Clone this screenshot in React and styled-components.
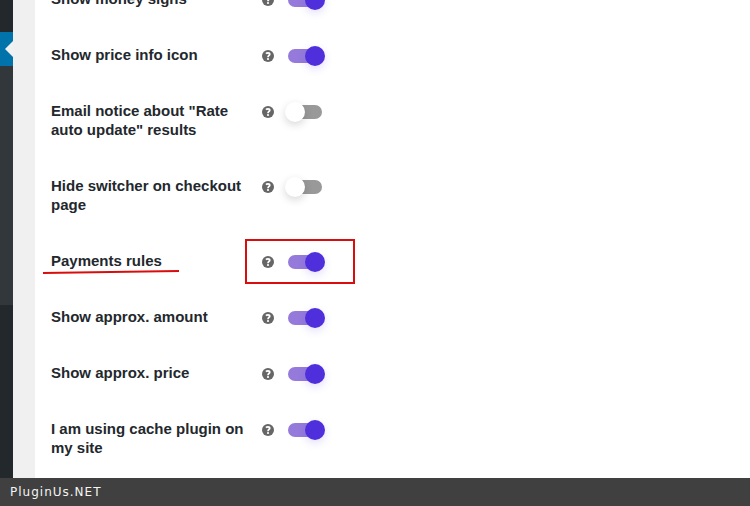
import React, { useState } from 'react';

import styled, { createGlobalStyle } from 'styled-components';

const options = [
  { id: 'money-signs', label: 'Show money signs', on: true },
  { id: 'price-info', label: 'Show price info icon', on: true },
  {
    id: 'email-notice',
    label: 'Email notice about "Rate auto update" results',
    on: false
  },
  { id: 'hide-switcher', label: 'Hide switcher on checkout page', on: false },
  { id: 'payments-rules', label: 'Payments rules', on: true, marked: true },
  { id: 'approx-amount', label: 'Show approx. amount', on: true },
  { id: 'approx-price', label: 'Show approx. price', on: true },
  { id: 'cache-plugin', label: 'I am using cache plugin on my site', on: true }
];

const GlobalStyle = createGlobalStyle`
  * {
    box-sizing: border-box;
  }

  body {
    margin: 0;
    background: #fff;
    font-family: "Liberation Sans", Arial, sans-serif;
  }
`;

const Page = styled.div`
  display: flex;
  flex-direction: column;
  min-height: 100vh;
  overflow: hidden;
`;

const Main = styled.div`
  display: flex;
  flex: 1;
`;

// Admin menu, collapsed to its edge
const Menu = styled.nav`
  display: flex;
  flex-direction: column;
  flex: none;
  width: 13px;
  padding-top: 32px;
  background: #23282d;
`;

const CurrentItem = styled.div`
  display: flex;
  align-items: center;
  justify-content: flex-end;
  height: 34px;
  background: #0073aa;

  &::after {
    content: '';
    border: 8px solid transparent;
    border-left-width: 0;
    border-right-color: #f1f1f1;
  }
`;

const Submenu = styled.div`
  height: 239px;
  background: #32373c;
`;

const Content = styled.main`
  flex: 1;
  border-left: 22px solid #f0f0f0;
  background: #fff;
`;

// The list is scrolled, so its first row is cut by the top edge
const List = styled.ul`
  margin: -28px 0 0;
  padding: 0 16px;
  list-style: none;
`;

const Row = styled.li`
  position: relative;
  display: flex;
  align-items: flex-start;
  padding: 17px 0 18px;
`;

const Label = styled.label`
  width: 211px;
  padding: 0 16px 2px 0;
  color: #23282d;
  font-size: 15px;
  font-weight: bold;
  line-height: 19px;
`;

const Help = styled.button`
  display: flex;
  align-items: center;
  height: 21px;
  margin-right: 11px;
  padding: 0;
  border: 0;
  background: none;
  color: #666;
`;

const Switch = styled.input`
  appearance: none;
  display: flex;
  align-items: center;
  width: 40px;
  height: 20px;
  margin: 1px 0 0;
  cursor: pointer;

  &::before {
    content: '';
    width: 34px;
    height: 14px;
    margin-left: 3px;
    border-radius: 7px;
    background: #999;
  }

  &::after {
    content: '';
    width: 20px;
    height: 20px;
    margin-left: -37px;
    border-radius: 50%;
    background: #fff;
    box-shadow: 0 3px 8px rgba(0, 0, 0, 0.16);
  }

  &:checked::before {
    background: #957adb;
  }

  &:checked::after {
    margin-left: -17px;
    background: #4f2edc;
    box-shadow: 0 3px 8px rgba(79, 46, 220, 0.16);
  }
`;

// Red marks drawn over a row
const Frame = styled.span`
  position: absolute;
  top: 5px;
  left: 194px;
  width: 110px;
  height: 45px;
  border: 2px solid #d90d0d;
  pointer-events: none;
`;

const Underline = styled.svg`
  position: absolute;
  top: 35px;
  left: -8px;
  width: 136px;
  height: 6px;
  pointer-events: none;
`;

const Footer = styled.footer`
  height: 28px;
  padding: 0 10px;
  background: #404040;
  color: #f4f4f4;
  font-family: "DejaVu Sans", Verdana, sans-serif;
  font-size: 12px;
  letter-spacing: 1px;
  line-height: 28px;
`;

const HelpIcon = () => (
  <svg width="12" height="12" viewBox="0 0 12 12" aria-hidden="true">
    <circle cx="6" cy="6" r="6" fill="currentColor" />
    <path
      d="M4 3.7C4.5 3.1 5.1 2.8 6 2.8C7.1 2.8 7.7 3.3 7.7 4.2C7.7 5.4 6 5.5 6 7.2"
      fill="none"
      stroke="#fff"
      strokeWidth="1.8"
    />
    <circle cx="6" cy="9" r="1.1" fill="#fff" />
  </svg>
);

const Option = ({ id, label, on, marked }) => {
  const [checked, setChecked] = useState(on);

  return (
    <Row>
      <Label htmlFor={id}>{label}</Label>
      <Help type="button" aria-label={`Help: ${label}`}>
        <HelpIcon />
      </Help>
      <Switch
        type="checkbox"
        role="switch"
        id={id}
        checked={checked}
        onChange={() => setChecked(!checked)}
      />
      {marked && (
        <>
          <Frame />
          <Underline viewBox="0 0 136 6" aria-hidden="true">
            <path d="M0 4L136 2" stroke="#d90d0d" strokeWidth="2" />
          </Underline>
        </>
      )}
    </Row>
  );
};

const App = () => (
  <Page>
    <GlobalStyle />
    <Main>
      <Menu>
        <CurrentItem />
        <Submenu />
      </Menu>
      <Content>
        <List>
          {options.map(option => (
            <Option key={option.id} {...option} />
          ))}
        </List>
      </Content>
    </Main>
    <Footer>PluginUs.NET</Footer>
  </Page>
);

export default App;
